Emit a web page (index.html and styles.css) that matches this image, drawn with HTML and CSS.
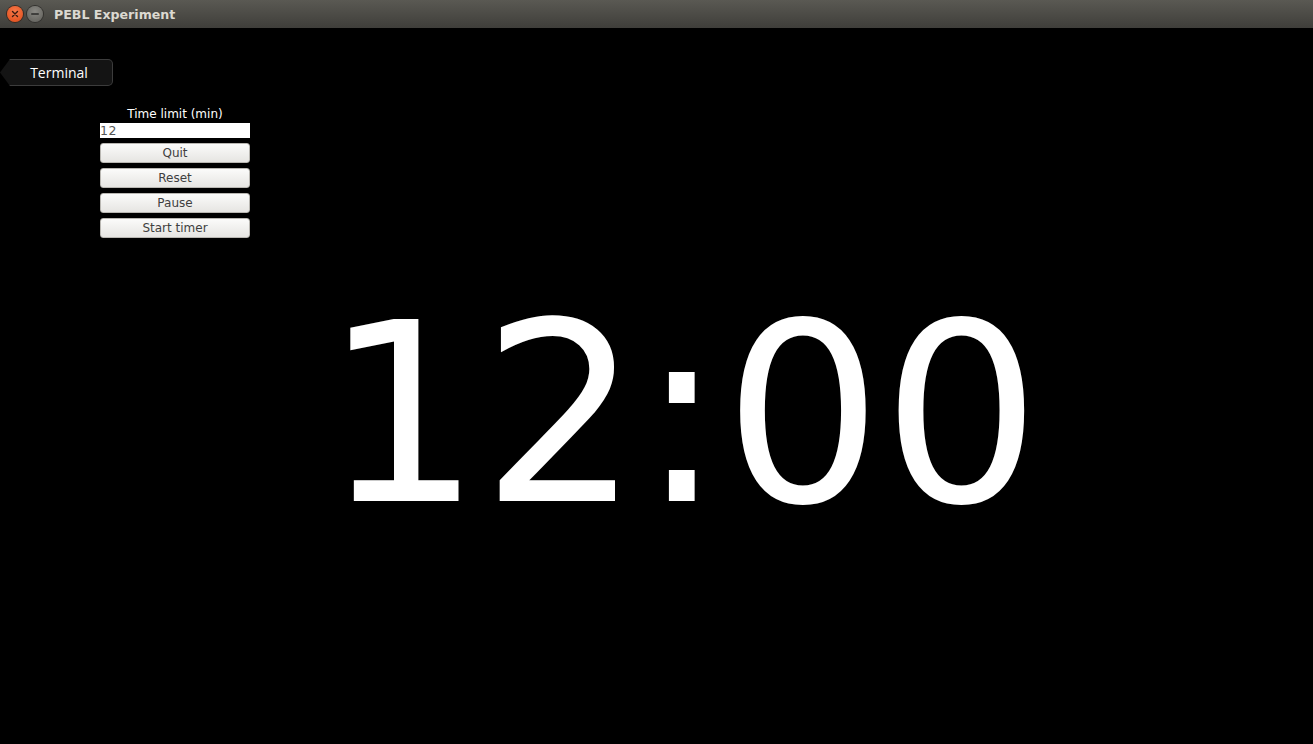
FILE: index.html
```html
<!DOCTYPE html>
<html>
<head>
<meta charset="utf-8">
<link rel="stylesheet" href="styles.css">
</head>
<body>
<div class="window">
  <div class="titlebar">
    <span class="wbtn close"><svg width="14" height="14" viewBox="0 0 14 14"><path d="M4.5 4.5 L9.5 9.5 M9.5 4.5 L4.5 9.5" stroke="#3a1a10" stroke-width="1.4" stroke-linecap="round"/></svg></span>
    <span class="wbtn min"><svg width="14" height="14" viewBox="0 0 14 14"><path d="M3.8 7 H10.2" stroke="#2a2a28" stroke-width="1.6" stroke-linecap="round"/></svg></span>
    <span class="title">PEBL Experiment</span>
  </div>
  <div class="content">
    <div class="tab">Terminal</div>
    <div class="panel">
      <div class="label">Time limit (min)</div>
      <div class="input">12</div>
      <div class="btn">Quit</div>
      <div class="btn">Reset</div>
      <div class="btn">Pause</div>
      <div class="btn">Start timer</div>
    </div>
    <div class="clock">12:00</div>
  </div>
</div>
</body>
</html>
```

FILE: styles.css
```css
html, body {
  margin: 0;
  padding: 0;
  background: #000;
  width: 1313px;
  height: 744px;
  overflow: hidden;
}
.window {
  width: 1313px;
  height: 744px;
  display: flex;
  flex-direction: column;
}
.titlebar {
  height: 28px;
  flex: 0 0 28px;
  background: linear-gradient(#5a5953, #3f3e3a);
  display: flex;
  align-items: center;
  padding-left: 7px;
  box-sizing: border-box;
}
.wbtn {
  width: 16px;
  height: 16px;
  border-radius: 50%;
  display: flex;
  align-items: center;
  justify-content: center;
  margin-right: 4px;
}
.wbtn.close {
  background: radial-gradient(circle at 50% 35%, #f8794a, #df4a16);
  box-shadow: 0 0 0 1px #3a2a22;
}
.wbtn.min {
  background: radial-gradient(circle at 50% 35%, #8a8984, #5e5d58);
  box-shadow: 0 0 0 1px #32312e;
}
.title {
  margin-left: 7px;
  font-family: "DejaVu Sans", sans-serif;
  font-weight: bold;
  font-size: 12.6px;
  color: #dcd9d1;
}
.content {
  flex: 1;
  background: #000;
  padding-top: 31px;
}
.tab {
  width: 113px;
  height: 27px;
  box-sizing: border-box;
  background: #141414;
  border: 1px solid #3c3c3c;
  border-left: none;
  border-radius: 0 5px 5px 0;
  clip-path: polygon(10px 0, 100% 0, 100% 100%, 10px 100%, 0 50%);
  color: #fff;
  font-family: "Open Sans", "DejaVu Sans", sans-serif;
  font-size: 14px;
  display: flex;
  align-items: center;
  justify-content: center;
  padding-left: 6px;
}
.panel {
  margin-left: 100px;
  width: 150px;
  margin-top: 21px;
  display: flex;
  flex-direction: column;
  font-family: "DejaVu Sans", sans-serif;
  font-size: 12px;
}
.label {
  color: #fff;
  text-align: center;
  height: 15px;
  line-height: 15px;
}
.input {
  background: #fff;
  color: #555;
  height: 15px;
  line-height: 15px;
  margin-top: 1px;
  margin-bottom: 5px;
  font-size: 12.5px;
  letter-spacing: 0.5px;
}
.btn {
  height: 20px;
  box-sizing: border-box;
  margin-bottom: 5px;
  background: linear-gradient(#fbfbfa, #e6e5e2);
  border: 1px solid #b9b7b2;
  border-radius: 3px;
  color: #3f3f3f;
  text-align: center;
  line-height: 18px;
}
.clock {
  margin-top: 27px;
  padding-left: 323px;
  font-family: "DejaVu Sans", sans-serif;
  font-size: 249px;
  color: #fff;
  line-height: normal;
  white-space: nowrap;
}
```
